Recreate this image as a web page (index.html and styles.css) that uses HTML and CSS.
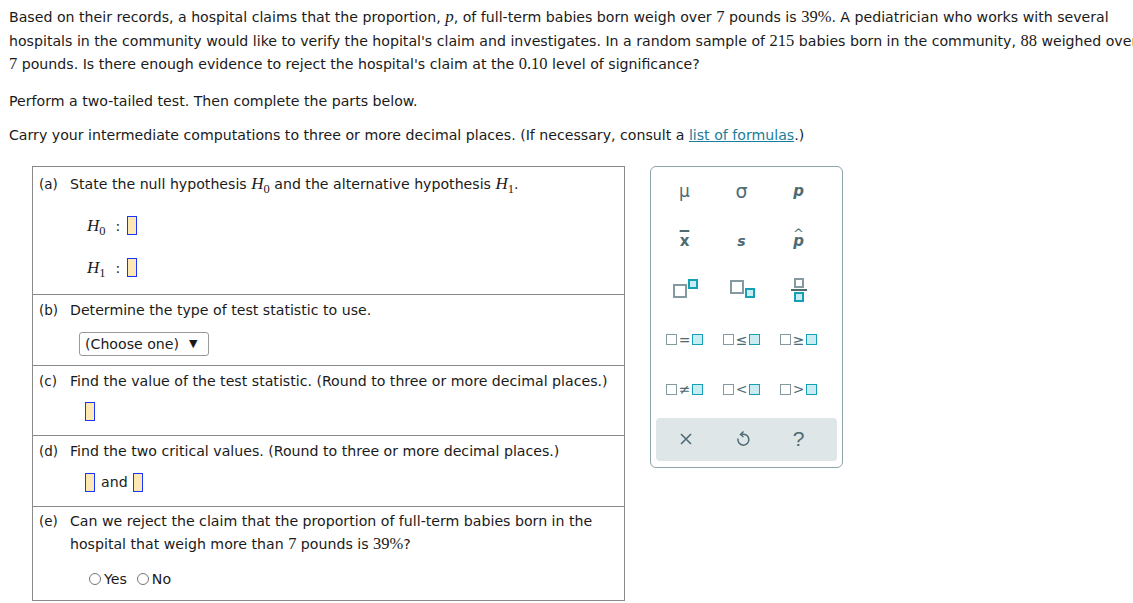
FILE: index.html
```html
<!DOCTYPE html>
<html>
<head>
<meta charset="utf-8">
<link rel="stylesheet" href="styles.css">
</head>
<body>
<div class="page">
  <p class="intro">Based on their records, a hospital claims that the proportion, <i class="m">p</i>, of full-term babies born weigh over <span class="n">7</span> pounds is <span class="n">39%</span>. A pediatrician who works with several hospitals in the community would like to verify the hopital's claim and investigates. In a random sample of <span class="n">215</span> babies born in the community, <span class="n">88</span> weighed over <span class="n">7</span> pounds. Is there enough evidence to reject the hospital's claim at the <span class="n">0.10</span> level of significance?</p>
  <p class="line">Perform a two-tailed test. Then complete the parts below.</p>
  <p class="line">Carry your intermediate computations to three or more decimal places. (If necessary, consult a <a class="link">list of formulas</a>.)</p>

  <div class="work">
    <div class="parts">
      <div class="part part-a">
        <div class="ph"><span class="lbl">(a)</span><span class="q">State the null hypothesis <i class="m">H</i><sub class="n">0</sub> and the alternative hypothesis <i class="m">H</i><sub class="n">1</sub>.</span></div>
        <div class="hyp"><span class="hv"><i class="m">H</i><sub class="n">0</sub></span><span class="colon">:</span><span class="box"></span></div>
        <div class="hyp"><span class="hv"><i class="m">H</i><sub class="n">1</sub></span><span class="colon">:</span><span class="box"></span></div>
      </div>
      <div class="part part-b">
        <div class="ph"><span class="lbl">(b)</span><span class="q">Determine the type of test statistic to use.</span></div>
        <div class="ans"><span class="select">(Choose one)<span class="tri">▼</span></span></div>
      </div>
      <div class="part part-c">
        <div class="ph"><span class="lbl">(c)</span><span class="q">Find the value of the test statistic. (Round to three or more decimal places.)</span></div>
        <div class="ans ans-c"><span class="box"></span></div>
      </div>
      <div class="part part-d">
        <div class="ph"><span class="lbl">(d)</span><span class="q">Find the two critical values. (Round to three or more decimal places.)</span></div>
        <div class="ans ans-d"><span class="box"></span><span class="and">and</span><span class="box"></span></div>
      </div>
      <div class="part part-e">
        <div class="ph"><span class="lbl">(e)</span><span class="q">Can we reject the claim that the proportion of full-term babies born in the hospital that weigh more than <span class="n">7</span> pounds is <span class="n">39%</span>?</span></div>
        <div class="ans ans-e"><span class="radio"></span><span class="rt">Yes</span><span class="radio r2"></span><span class="rt">No</span></div>
      </div>
    </div>

    <div class="palette">
      <div class="grid">
        <div class="cell g">μ</div>
        <div class="cell g sig">σ</div>
        <div class="cell g bi">p</div>
        <div class="cell g xbar">x</div>
        <div class="cell g bi s">s</div>
        <div class="cell g phat"><span class="hat">^</span>p</div>
        <div class="cell"><span class="sup-wrap"><span class="sq big"></span><span class="sq teal small up"></span></span></div>
        <div class="cell"><span class="sup-wrap"><span class="sq big"></span><span class="sq teal small down"></span></span></div>
        <div class="cell"><span class="frac"><span class="sq fs"></span><span class="bar"></span><span class="sq teal fs"></span></span></div>
        <div class="cell rel"><span class="sq r"></span><span class="op">=</span><span class="sq teal r"></span></div>
        <div class="cell rel"><span class="sq r"></span><span class="op">≤</span><span class="sq teal r"></span></div>
        <div class="cell rel"><span class="sq r"></span><span class="op">≥</span><span class="sq teal r"></span></div>
        <div class="cell rel"><span class="sq r"></span><span class="op">≠</span><span class="sq teal r"></span></div>
        <div class="cell rel"><span class="sq r"></span><span class="op">&lt;</span><span class="sq teal r"></span></div>
        <div class="cell rel"><span class="sq r"></span><span class="op">&gt;</span><span class="sq teal r"></span></div>
      </div>
      <div class="actions">
        <span class="act"><svg width="14" height="14" viewBox="0 0 14 14"><path d="M2 2 L12 12 M12 2 L2 12" stroke="#4e6b74" stroke-width="1.6" fill="none"/></svg></span>
        <span class="act"><svg width="16" height="18" viewBox="0 0 16 18"><path d="M6.5 4.5 A5.5 5.5 0 1 1 3 8.5" stroke="#4e6b74" stroke-width="1.5" fill="none"/><path d="M8.5 1.5 L5.5 4.5 L8.5 7" stroke="#4e6b74" stroke-width="1.5" fill="none"/></svg></span>
        <span class="act q">?</span>
      </div>
    </div>
  </div>
</div>
</body>
</html>
```
FILE: styles.css
```css
html, body { margin: 0; padding: 0; background: #fff; }
body {
  font-family: "DejaVu Sans", Verdana, sans-serif;
  font-size: 14.15px;
  color: #1a1a1a;
}
.page { padding: 6px 9px 0 9px; }
.intro { margin: 0; line-height: 23.6px; width: 1136px; }
.line { margin: 14px 0 0 0; line-height: 20px; }
.line + .line { margin-top: 14px; }
.m { font-family: "Liberation Serif", "Times New Roman", serif; font-size: 17px; font-style: italic; line-height: 1; }
.n { font-family: "Liberation Serif", "Times New Roman", serif; font-size: 16.5px; line-height: 1; }
sub.n { font-size: 12.5px; font-style: normal; vertical-align: -4px; line-height: 0; }
.link { color: #1a7d9b; text-decoration: underline; }

.work { display: flex; align-items: flex-start; margin-top: 21px; margin-left: 23px; }
.parts { width: 591px; border: 1px solid #8a8a8a; }
.part { border-top: 1px solid #8a8a8a; box-sizing: border-box; }
.part:first-child { border-top: none; }
.ph { display: flex; padding: 5px 0 0 6px; line-height: 20px; }
.lbl { width: 31px; flex: none; font-size: 13.5px; }
.q { flex: 1; padding-right: 2px; }
.part-a { height: 127px; }
.part-a .ph { padding-top: 7px; }
.part-b { height: 71px; }
.part-c { height: 70px; }
.part-d { height: 71px; }
.part-e { height: 94px; padding-top: 2px; }
.part-e .ph { line-height: 23.5px; padding-top: 1px; }

.hyp { display: flex; align-items: center; padding-left: 54px; height: 42px; }
.part-a .ph + .hyp { margin-top: 11px; }
.hv { display: inline-block; }
.colon { margin: 0 7px 0 10px; }
.box {
  display: inline-block; width: 10px; height: 19px; box-sizing: border-box;
  background: #fde8b3; border: 1px solid #1a33ff;
}
.ans { padding-left: 46px; }
.select {
  display: inline-flex; align-items: center;
  height: 24px; box-sizing: border-box; width: 130px;
  border: 1px solid #9a9a9a; border-radius: 3px;
  padding: 0 0 0 5px; margin-top: 12px;
}
.tri { font-size: 11px; margin-left: 10px; }
.ans-c { padding-left: 52px; padding-top: 11px; }
.ans-d { display: flex; align-items: center; padding-left: 52px; padding-top: 12px; }
.and { margin: 0 5px 0 6px; }
.ans-e { display: flex; align-items: center; padding-left: 56px; padding-top: 14px; }
.radio { width: 12px; height: 12px; border: 1px solid #777; border-radius: 50%; display: inline-block; box-sizing: border-box; margin-right: 3px; }
.r2 { margin-left: 10px; }

.palette {
  margin-left: 25px; margin-top: 0;
  width: 193px; box-sizing: border-box;
  border: 1px solid #8fa3aa; border-radius: 6px;
  padding: 0 5px 6px 5px;
  background: #fff;
}
.grid { display: grid; grid-template-columns: repeat(3, 57px); grid-auto-rows: 49.4px; }
.cell { display: flex; align-items: center; justify-content: center; color: #4e6b74; }
.g { font-size: 17px; }
.sig { font-size: 19px; }
.bi { font-weight: bold; font-style: italic; font-size: 15px; }
.s { font-size: 14px; }
.xbar { font-weight: bold; font-size: 15px; text-decoration: overline; text-decoration-thickness: 2px; }
.phat { position: relative; font-weight: bold; font-style: italic; font-size: 15px; }
.phat .hat { position: absolute; left: 50%; top: 10px; transform: translateX(-50%); font-weight: normal; font-size: 13px; font-style: normal; }

.sq { display: inline-block; box-sizing: border-box; border: 2px solid #8499a0; background: #fff; }
.sq.teal { border-color: #15a0b5; background: #c9ecf2; }
.sup-wrap { position: relative; display: inline-block; width: 24px; height: 20px; }
.sq.big { width: 14px; height: 14px; position: absolute; left: 0; top: 4px; }
.sq.small { width: 10px; height: 10px; position: absolute; left: 15px; }
.sq.up { top: -1px; }
.sq.down { top: 8px; }
.cell:nth-child(8) .sq.big { top: 0; }
.frac { display: flex; flex-direction: column; align-items: center; }
.sq.fs { width: 10px; height: 10px; }
.frac .bar { width: 16px; height: 2px; background: #4e6b74; margin: 1px 0; }
.rel { font-size: 14px; }
.sq.r { width: 11px; height: 11px; border-width: 1.5px; }
.op { margin: 0 2px; line-height: 10px; }

.actions {
  margin-top: 4px; height: 43px; border-radius: 4px;
  background: #dfe6e8;
  display: grid; grid-template-columns: repeat(3, 57px);
  padding-left: 1px;
  align-items: center; justify-items: center;
}
.act { display: flex; align-items: center; justify-content: center; color: #4e6b74; }
.act.q { font-size: 21px; font-weight: normal; font-family: "Liberation Sans", sans-serif; }
```
